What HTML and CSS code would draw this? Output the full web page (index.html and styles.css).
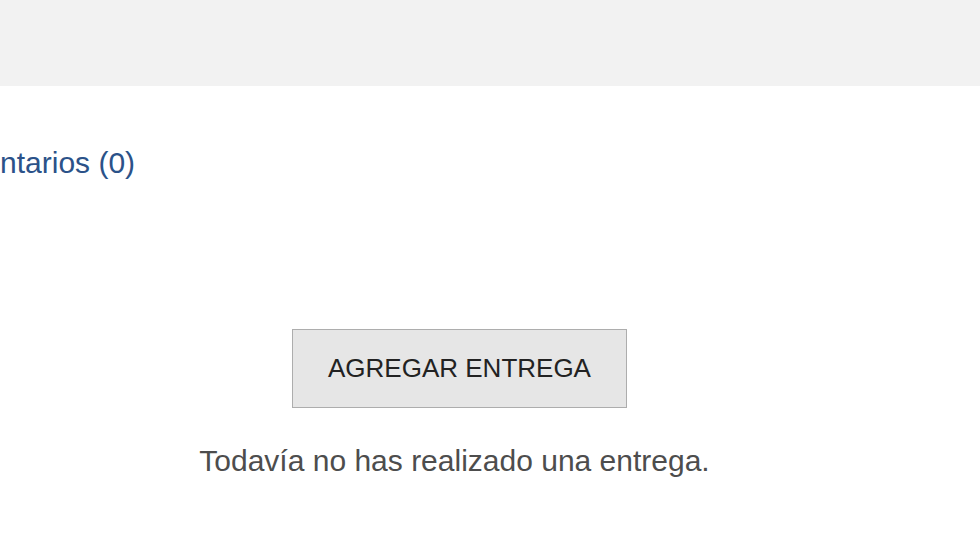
FILE: index.html
```html
<!DOCTYPE html>
<html lang="es">
<head>
<meta charset="utf-8">
<title>Entrega</title>
<link rel="stylesheet" href="styles.css">
</head>
<body>
<header class="topbar"></header>
<main class="content">
  <div class="comments"><a class="comments-link" href="#">Comentarios (0)</a></div>
  <section class="submission">
    <button class="add-btn" type="button">AGREGAR ENTREGA</button>
    <p class="status">Todavía no has realizado una entrega.</p>
  </section>
</main>
</body>
</html>
```
FILE: styles.css
```css
html, body {
  margin: 0;
  padding: 0;
  background: #ffffff;
  font-family: "Liberation Sans", Arial, sans-serif;
  overflow: hidden;
}
.topbar {
  height: 86px;
  background: #f2f2f2;
}
.content {
  display: flex;
  flex-direction: column;
}
.comments {
  margin-top: 60px;
  margin-left: -80px;
  height: 34px;
  white-space: nowrap;
}
.comments-link {
  font-size: 30px;
  line-height: 34px;
  color: #2b5289;
  text-decoration: none;
}
.submission {
  width: 919px;
  margin-top: 149px;
  display: flex;
  flex-direction: column;
  align-items: center;
}
.add-btn {
  width: 335px;
  height: 79px;
  background: #e6e6e6;
  border: 1px solid #adadad;
  border-radius: 0;
  font-family: "Liberation Sans", Arial, sans-serif;
  font-size: 26px;
  color: #222222;
  padding: 0;
}
.status {
  margin: 36px 0 0;
  padding-right: 10px;
  font-size: 30px;
  line-height: 34px;
  color: #4d4d4d;
}
```
